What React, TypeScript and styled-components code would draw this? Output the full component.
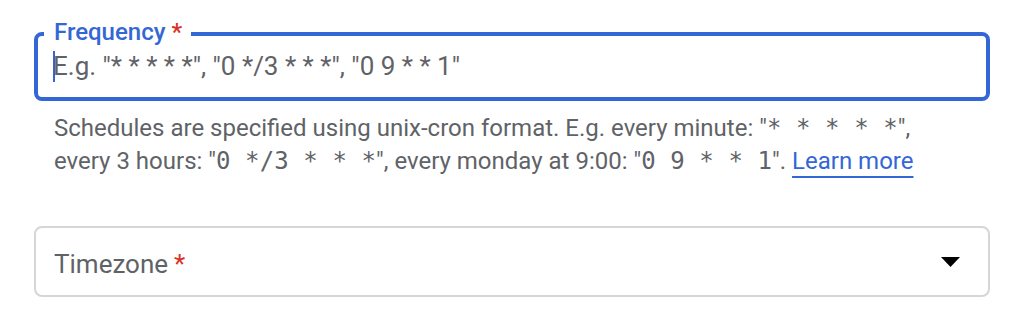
import React from "react";
import styled, { createGlobalStyle } from "styled-components";

const GlobalStyle = createGlobalStyle`
  html, body {
    margin: 0;
    padding: 0;
    background: #ffffff;
  }
  body {
    font-family: Roboto, "Noto Sans", Arial, sans-serif;
  }
`;

const Page = styled.div`
  width: 956px;
  padding: 18px 34px 0 34px;
  display: flex;
  flex-direction: column;
`;

const Outline = styled.fieldset`
  margin: 0;
  min-width: 0;
  padding: 0 6px 15px 6px;
  border: 4px solid #3367d6;
  border-radius: 8px;
`;

const Legend = styled.legend`
  padding: 0 9px 4px 10px;
  font-size: 24px;
  line-height: 28px;
  font-weight: 500;
  color: #3367d6;
`;

const Required = styled.span`
  color: #d93025;
  margin-left: 6px;
`;

const InputRow = styled.div`
  display: flex;
  align-items: center;
  height: 32px;
  padding-left: 9px;
`;

const Caret = styled.span`
  width: 2px;
  height: 31px;
  background: #3367d6;
  margin-right: -2px;
  flex: none;
`;

const TextInput = styled.input`
  flex: 1;
  border: none;
  outline: none;
  padding: 0;
  height: 32px;
  font-family: Roboto, sans-serif;
  font-size: 26px;
  color: #202124;
  background: transparent;
  caret-color: transparent;
  &::placeholder {
    color: #5f6368;
    opacity: 1;
  }
`;

const Hint = styled.p`
  margin: 11px 0 0 0;
  padding: 0 20px;
  font-size: 24px;
  line-height: 33px;
  color: #5f6368;
`;

const Code = styled.code`
  font-family: "DejaVu Sans Mono", "Liberation Mono", monospace;
  font-size: 24px;
  letter-spacing: 0.1px;
  color: #5f6368;
`;

const Link = styled.a`
  color: #3367d6;
  text-decoration: underline;
  text-underline-offset: 7px;
  text-decoration-thickness: 1.5px;
`;

const SelectBox = styled.div`
  margin-top: 48px;
  height: 67px;
  border: 2px solid #d6d6d6;
  border-radius: 8px;
  display: flex;
  align-items: center;
  justify-content: space-between;
  padding: 0 28px 0 18px;
`;

const SelectLabel = styled.span`
  padding-top: 4px;
  font-size: 26px;
  color: #5f6368;
`;

const Arrow = styled.svg`
  width: 19px;
  height: 10px;
  flex: none;
`;

export default function App() {
  return (
    <>
      <GlobalStyle />
      <Page>
        <Outline>
          <Legend>
            Frequency<Required>*</Required>
          </Legend>
          <InputRow>
            <Caret />
            <TextInput placeholder={'E.g. "* * * * *", "0 */3 * * *", "0 9 * * 1"'} />
          </InputRow>
        </Outline>
        <Hint>
          Schedules are specified using unix-cron format. E.g. every minute: "
          <Code>* * * * *</Code>",
          <br />
          every 3 hours: "<Code>0 */3 * * *</Code>", every monday at 9:00: "
          <Code>0 9 * * 1</Code>". <Link href="#">Learn more</Link>
        </Hint>
        <SelectBox>
          <SelectLabel>
            Timezone<Required>*</Required>
          </SelectLabel>
          <Arrow viewBox="0 0 19 10">
            <path d="M0 0 L19 0 L9.5 10 Z" fill="#000" />
          </Arrow>
        </SelectBox>
      </Page>
    </>
  );
}
